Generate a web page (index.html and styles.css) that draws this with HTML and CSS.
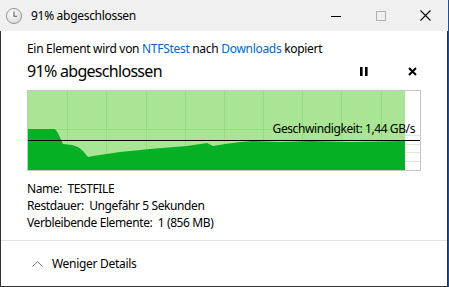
FILE: index.html
```html
<!DOCTYPE html>
<html lang="de">
<head>
    <meta charset="UTF-8">
    <meta name="viewport" content="width=device-width, initial-scale=1.0">
    <title>91% abgeschlossen</title>
    <link rel="stylesheet" href="styles.css">
</head>
<body>
    <div class="window">
        <div class="titlebar">
            <svg class="app-icon" width="18" height="18" viewBox="0 0 18 18">
                <defs>
                    <radialGradient id="face" cx="40%" cy="35%" r="70%">
                        <stop offset="0" stop-color="#ffffff"/>
                        <stop offset="1" stop-color="#d6d6d6"/>
                    </radialGradient>
                </defs>
                <circle cx="9" cy="9" r="7.6" fill="url(#face)" stroke="#9a9a9a" stroke-width="1"/>
                <path d="M9 4.5 V9.3 H12" fill="none" stroke="#555" stroke-width="1.1"/>
            </svg>
            <span class="title">91% abgeschlossen</span>
            <div class="caption-buttons">
                <span class="cap-btn">
                    <svg width="10" height="10" viewBox="0 0 10 10"><path d="M0 5.5 H10" stroke="#000" stroke-width="1"/></svg>
                </span>
                <span class="cap-btn">
                    <svg width="10" height="10" viewBox="0 0 10 10"><rect x="0.5" y="0.5" width="9" height="9" fill="none" stroke="#b0b0b0" stroke-width="1"/></svg>
                </span>
                <span class="cap-btn">
                    <svg width="11" height="11" viewBox="0 0 11 11"><path d="M0.5 0.5 L10.5 10.5 M10.5 0.5 L0.5 10.5" stroke="#000" stroke-width="1.1"/></svg>
                </span>
            </div>
        </div>

        <div class="content">
            <div class="subtitle">Ein Element wird von <span class="link">NTFStest</span> nach <span class="link">Downloads</span> kopiert</div>
            <div class="status-row">
                <div class="status">91% abgeschlossen</div>
                <div class="actions">
                    <svg width="8" height="9" viewBox="0 0 8 9"><rect x="0" y="0" width="2.6" height="9" fill="#000"/><rect x="5" y="0" width="2.6" height="9" fill="#000"/></svg>
                    <svg width="9" height="9" viewBox="0 0 9 9"><path d="M1 1 L8 8 M8 1 L1 8" stroke="#000" stroke-width="2"/></svg>
                </div>
            </div>

            <div class="chart">
                <svg width="392" height="79" viewBox="0 0 392 79">
                    <rect x="0" y="0" width="377" height="79" fill="#a9e594"/>
                    <g stroke="#95dc7f" stroke-width="1">
                        <path d="M39.5 0 V79 M78.5 0 V79 M118.5 0 V79 M157.5 0 V79 M196.5 0 V79 M235.5 0 V79 M274.5 0 V79 M313.5 0 V79 M353.5 0 V79"/>
                        <path d="M0 38.5 H377"/>
                    </g>
                    <g stroke="#d5f0cc" stroke-width="1">
                        <path d="M377 44.5 H392 M377 53.5 H392 M377 61.5 H392 M377 70.5 H392"/>
                    </g>
                    <polygon fill="#06b025" points="0,38 27,38 30,42 35,53 44,54 50,56 55,60 60,66 65,65 92,61 122,58 159,55 179,52 185,55 197,53 212,51 225,50 252,51 282,50 322,51 377,50 377,79 0,79"/>
                    <path d="M0 49.5 H392" stroke="#000" stroke-width="1"/>
                </svg>
                <div class="speed">Geschwindigkeit: 1,44 GB/s</div>
            </div>

            <div class="details">
                <div>Name:&nbsp; TESTFILE</div>
                <div>Restdauer:&nbsp; Ungefähr 5 Sekunden</div>
                <div>Verbleibende Elemente:&nbsp; 1 (856 MB)</div>
            </div>

            <div class="footer">
                <svg class="chevron" width="11" height="6" viewBox="0 0 11 6"><path d="M0.5 5.5 L5.5 0.7 L10.5 5.5" fill="none" stroke="#7a7a7a" stroke-width="1"/></svg>
                <span>Weniger Details</span>
            </div>
        </div>
    </div>
</body>
</html>
```

FILE: styles.css
```css
/* General Styles */
body {
    margin: 0;
    background: #1d4f91;
    font-family: 'Noto Sans', 'Open Sans', sans-serif;
    font-size: 12px;
    letter-spacing: -0.3px;
    color: #000;
}

.window {
    width: 448px;
    height: 287px;
    background: #fff;
    display: flex;
    flex-direction: column;
}

.titlebar {
    height: 31px;
    background: #f0f0f0;
    display: flex;
    align-items: center;
    flex-shrink: 0;
}

.app-icon {
    margin-left: 5px;
    margin-top: 1px;
}

.title {
    margin-left: 8px;
    font-size: 12px;
}

.caption-buttons {
    margin-left: auto;
    display: flex;
    height: 100%;
}

.cap-btn {
    width: 45px;
    display: flex;
    align-items: center;
    justify-content: center;
}

.cap-btn svg {
    display: block;
}

.content {
    flex: 1;
    border-left: 1px solid #333;
    border-right: 1px solid #333;
    border-bottom: 1px solid #333;
    padding: 10px 26px 0 26px;
    display: flex;
    flex-direction: column;
}

.subtitle {
    line-height: 16px;
}

.link {
    color: #0066cc;
}

.status-row {
    display: flex;
    align-items: center;
    margin-top: 3px;
}

.status {
    font-size: 16px;
    line-height: 22px;
    letter-spacing: -0.7px;
}

.actions {
    margin-left: auto;
    display: flex;
    gap: 40px;
    align-items: center;
    margin-right: 4px;
}

.chart {
    position: relative;
    width: 392px;
    height: 79px;
    border: 1px solid #c4c4c4;
    margin-top: 8px;
}

.chart svg {
    display: block;
}

.speed {
    position: absolute;
    right: 5px;
    top: 30px;
    line-height: 16px;
    letter-spacing: -0.4px;
}

.details {
    margin-top: 9px;
    line-height: 17px;
    letter-spacing: -0.4px;
}

.footer {
    margin: 9px -26px 0 -26px;
    border-top: 1px solid #e3e3e3;
    display: flex;
    align-items: center;
    padding: 14px 0 0 31px;
    gap: 9px;
}

.chevron {
    display: block;
}
```
